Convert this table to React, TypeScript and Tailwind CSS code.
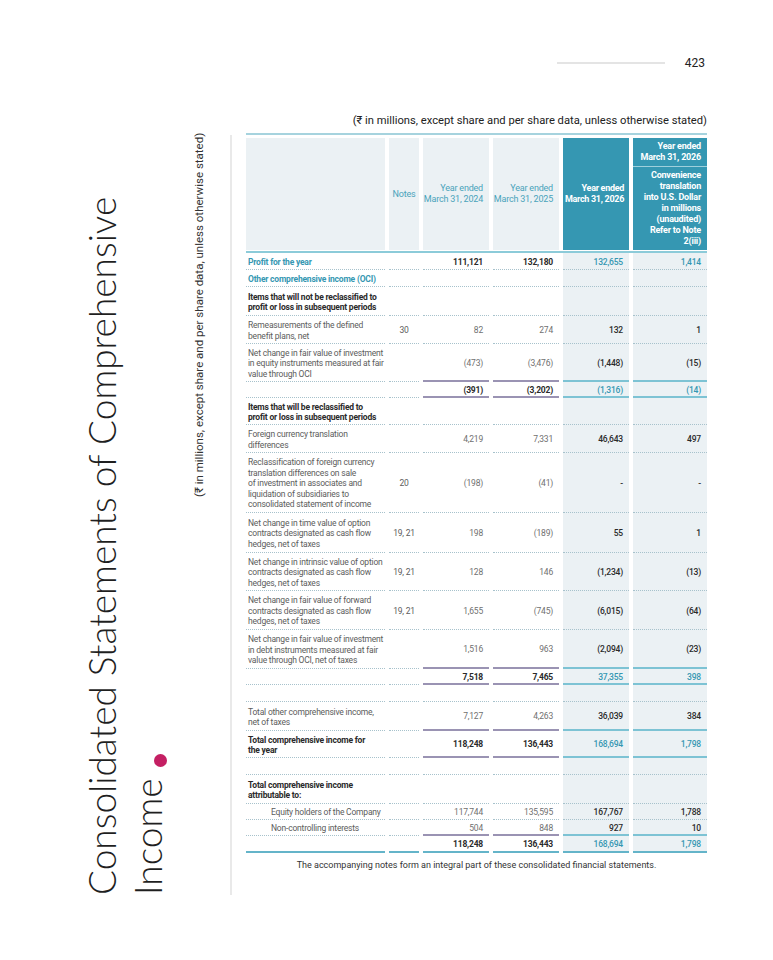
import React from 'react';

type Tone = 'g' | 'd' | 't' | 'b';
type RowData = {
  h: string;
  label?: string[];
  lc?: 'teal' | 'bold' | 'gray' | 'indent';
  notes?: string;
  v?: [string, string, string, string];
  vt?: [Tone, Tone, Tone, Tone];
  bottom?: 'dot' | 'rule' | 'final';
};

const GRID = 'grid grid-cols-[139px_30px_66px_66px_66px_74px] gap-x-[4px]';

const rows: RowData[] = [
  { h: 'h-[17px]', label: ['Profit for the year'], lc: 'teal', v: ['111,121', '132,180', '132,655', '1,414'], vt: ['b', 'b', 't', 't'] },
  { h: 'h-[17px]', label: ['Other comprehensive income (OCI)'], lc: 'teal' },
  { h: 'h-[29px]', label: ['Items that will not be reclassified to', 'profit or loss in subsequent periods'], lc: 'bold' },
  {
    h: 'h-[28px]', label: ['Remeasurements of the defined', 'benefit plans, net'], lc: 'gray', notes: '30',
    v: ['82', '274', '132', '1'], vt: ['g', 'g', 'd', 'd'],
  },
  {
    h: 'h-[38px]', label: ['Net change in fair value of investment', 'in equity instruments measured at fair', 'value through OCI'],
    lc: 'gray', v: ['(473)', '(3,476)', '(1,448)', '(15)'], vt: ['g', 'g', 'd', 'd'], bottom: 'rule',
  },
  { h: 'h-[16px]', v: ['(391)', '(3,202)', '(1,316)', '(14)'], vt: ['b', 'b', 't', 't'], bottom: 'rule' },
  { h: 'h-[27px]', label: ['Items that will be reclassified to', 'profit or loss in subsequent periods'], lc: 'bold' },
  {
    h: 'h-[28px]', label: ['Foreign currency translation', 'differences'], lc: 'gray',
    v: ['4,219', '7,331', '46,643', '497'], vt: ['g', 'g', 'd', 'd'],
  },
  {
    h: 'h-[60px]',
    label: [
      'Reclassification of foreign currency',
      'translation differences on sale',
      'of investment in associates and',
      'liquidation of subsidiaries to',
      'consolidated statement of income',
    ],
    lc: 'gray', notes: '20', v: ['(198)', '(41)', '-', '-'], vt: ['g', 'g', 'd', 'd'],
  },
  {
    h: 'h-[40px]', label: ['Net change in time value of option', 'contracts designated as cash flow', 'hedges, net of taxes'],
    lc: 'gray', notes: '19, 21', v: ['198', '(189)', '55', '1'], vt: ['g', 'g', 'd', 'd'],
  },
  {
    h: 'h-[38px]', label: ['Net change in intrinsic value of option', 'contracts designated as cash flow', 'hedges, net of taxes'],
    lc: 'gray', notes: '19, 21', v: ['128', '146', '(1,234)', '(13)'], vt: ['g', 'g', 'd', 'd'],
  },
  {
    h: 'h-[39px]', label: ['Net change in fair value of forward', 'contracts designated as cash flow', 'hedges, net of taxes'],
    lc: 'gray', notes: '19, 21', v: ['1,655', '(745)', '(6,015)', '(64)'], vt: ['g', 'g', 'd', 'd'],
  },
  {
    h: 'h-[39px]', label: ['Net change in fair value of investment', 'in debt instruments measured at fair', 'value through OCI, net of taxes'],
    lc: 'gray', v: ['1,516', '963', '(2,094)', '(23)'], vt: ['g', 'g', 'd', 'd'], bottom: 'rule',
  },
  { h: 'h-[16px]', v: ['7,518', '7,465', '37,355', '398'], vt: ['b', 'b', 't', 't'], bottom: 'rule' },
  { h: 'h-[17px]' },
  {
    h: 'h-[29px]', label: ['Total other comprehensive income,', 'net of taxes'], lc: 'gray',
    v: ['7,127', '4,263', '36,039', '384'], vt: ['g', 'g', 'd', 'd'], bottom: 'rule',
  },
  {
    h: 'h-[27px]', label: ['Total comprehensive income for', 'the year'], lc: 'bold',
    v: ['118,248', '136,443', '168,694', '1,798'], vt: ['b', 'b', 't', 't'], bottom: 'rule',
  },
  { h: 'h-[17px]' },
  { h: 'h-[29px]', label: ['Total comprehensive income', 'attributable to:'], lc: 'bold' },
  {
    h: 'h-[16px]', label: ['Equity holders of the Company'], lc: 'indent',
    v: ['117,744', '135,595', '167,767', '1,788'], vt: ['g', 'g', 'd', 'd'],
  },
  {
    h: 'h-[16px]', label: ['Non-controlling interests'], lc: 'indent',
    v: ['504', '848', '927', '10'], vt: ['g', 'g', 'd', 'd'], bottom: 'rule',
  },
  { h: 'h-[17px]', v: ['118,248', '136,443', '168,694', '1,798'], vt: ['b', 'b', 't', 't'], bottom: 'final' },
];

const DOT = 'border-b border-dotted border-[#a7c2cc]';
const PURPLE = 'border-b-2 border-solid border-[#9a93b3]';
const TEAL = 'border-b-2 border-solid border-[#7dc3d4]';
const FINAL = 'border-b-2 border-solid border-[#64b4c9]';

const toneCls: Record<Tone, string> = {
  g: 'text-[#707070] font-normal',
  d: 'text-[#2a2a2a] font-medium',
  b: 'text-[#2a2a2a] font-bold',
  t: 'text-[#3597b2] font-medium',
};

const labelCls = {
  teal: 'text-[#3597b2] font-bold pl-[2px]',
  bold: 'text-[#2a2a2a] font-bold pl-[2px]',
  gray: 'text-[#5c5c5c] font-normal pl-[2px]',
  indent: 'text-[#5c5c5c] font-normal pl-[25px]',
};

function BodyRow({ r }: { r: RowData }) {
  const bottom = r.bottom ?? 'dot';
  const side = bottom === 'final' ? FINAL : DOT;
  const cell = `flex items-center pt-[2px] leading-[10.5px] ${r.h}`;
  return (
    <div className={GRID}>
      <div className={`${cell} ${side} ${r.lc ? labelCls[r.lc] : ''}`}>
        <div>
          {(r.label ?? []).map((l, i) => (
            <div key={i}>{l}</div>
          ))}
        </div>
      </div>
      <div className={`${cell} ${side} justify-center text-[#5c5c5c]`}>{r.notes}</div>
      {[0, 1, 2, 3].map((i) => {
        const line = bottom === 'final' ? FINAL : bottom === 'rule' ? (i < 2 ? PURPLE : TEAL) : DOT;
        const bg = i >= 2 ? 'bg-[#ebf1f4]' : '';
        const tone = r.vt ? toneCls[r.vt[i]] : '';
        return (
          <div key={i} className={`${cell} ${line} ${bg} ${tone} justify-end pr-[6px]`}>
            {r.v ? r.v[i] : ''}
          </div>
        );
      })}
    </div>
  );
}

function Header() {
  const light = 'bg-[#ebf1f4] text-[#4aa3bb]';
  const dark = 'bg-[#3597b2] text-white font-bold';
  return (
    <div className={`${GRID} h-[112px] mt-[3px] text-[9px] leading-[11px] whitespace-nowrap`}>
      <div className={light} />
      <div className={`${light} flex items-center justify-center`}>Notes</div>
      <div className={`${light} flex items-center justify-end pr-[6px] text-right`}>
        Year ended
        <br />
        March 31, 2024
      </div>
      <div className={`${light} flex items-center justify-end pr-[6px] text-right`}>
        Year ended
        <br />
        March 31, 2025
      </div>
      <div className={`${dark} flex items-center justify-end pr-[5px] text-right tracking-[-0.3px]`}>
        Year ended
        <br />
        March 31, 2026
      </div>
      <div className="flex flex-col">
        <div className={`${dark} h-[28px] flex items-center justify-end pr-[6px] text-right`}>
          Year ended
          <br />
          March 31, 2026
        </div>
        <div className="h-[1px] bg-[#9fd0dc]" />
        <div className={`${dark} flex-1 flex items-center justify-end pr-[6px] text-right`}>
          Convenience
          <br />
          translation
          <br />
          into U.S. Dollar
          <br />
          in millions
          <br />
          (unaudited)
          <br />
          Refer to Note
          <br />
          2(iii)
        </div>
      </div>
    </div>
  );
}

export default function App() {
  return (
    <div className="w-[773px] h-[960px] bg-white overflow-hidden font-['Roboto','Noto_Sans','DejaVu_Sans',sans-serif] text-[#222]">
      <div className="flex items-center justify-end pt-[55px] pr-[68px]">
        <div className="w-[108px] h-[2px] bg-[#e4e4e4]" />
        <span className="ml-[20px] text-[12px] leading-[16px] text-[#222]">423</span>
      </div>

      <div className="mt-[43px] pr-[66px] text-right text-[11.2px] leading-[14px] text-[#222]">
        (₹ in millions, except share and per share data, unless otherwise stated)
      </div>

      <div className="flex mt-[5px] h-[762px]">
        <div className="ml-[79px] w-[92px] h-full [writing-mode:vertical-rl] rotate-180 font-['Lato','Open_Sans',sans-serif] font-light text-[37px] leading-[46px] text-[#1f1f1f] whitespace-nowrap">
          Consolidated Statements of Comprehensive
          <br />
          Income
          <span className="inline-block ms-[11px] w-[13px] h-[13px] rounded-full bg-[#c41f63] -translate-x-[13px]" />
        </div>

        <div className="ml-[17px] w-[22px] h-full [writing-mode:vertical-rl] rotate-180 text-end text-[11.5px] leading-[22px] text-[#333] whitespace-nowrap">
          (₹ in millions, except share and per share data, unless otherwise stated)
        </div>

        <div className="ml-[20px] w-[2px] h-[760px] mt-[2px] bg-[#e9e9e9]" />

        <div className="ml-[14px] w-[461px] text-[8.5px] tracking-[-0.2px]">
          <div className="h-[2px] bg-[#a6d3de]" />
          <Header />
          <div className="h-[2px] mt-[1px] bg-[#8ccbd9]" />
          {rows.map((r, i) => (
            <BodyRow key={i} r={r} />
          ))}
          <p className="mt-[6px] text-center text-[9px] leading-[12px] tracking-normal text-[#333]">
            The accompanying notes form an integral part of these consolidated financial statements.
          </p>
        </div>
      </div>
    </div>
  );
}
